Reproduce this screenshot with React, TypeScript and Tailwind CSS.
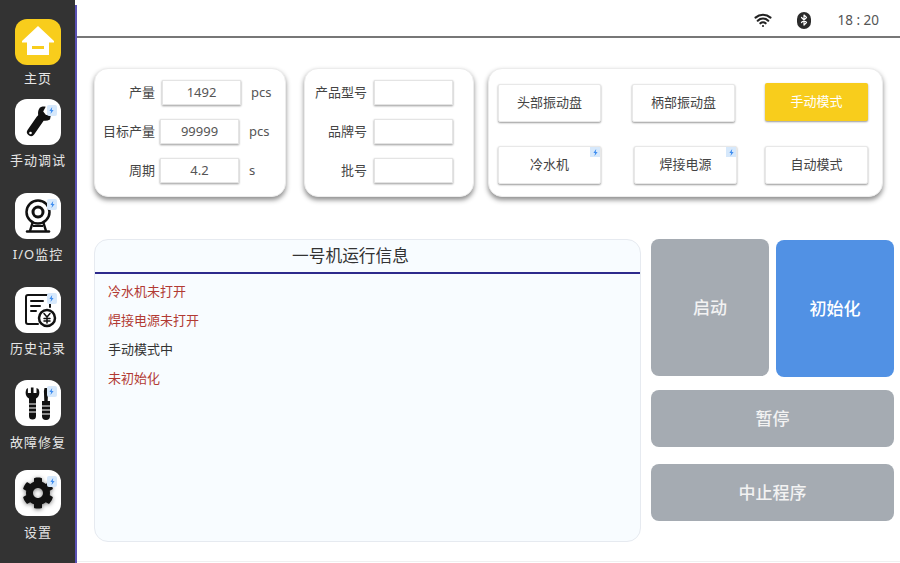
import { Bluetooth, Wifi } from 'lucide-react';
import { FaCog } from 'react-icons/fa';
import type { ReactNode } from 'react';

const FONT = 'font-["Noto_Sans","Noto_Sans_CJK_SC",sans-serif]';

function Flash({ className = '' }: { className?: string }) {
  return (
    <span className={`absolute flex items-center justify-center bg-[#d6e8fb] ${className}`}>
      <svg viewBox="0 0 10 10" className="w-[7px] h-[7px]">
        <path d="M6 0 2 5.6h2.4L3.6 10 8 4.2H5.4z" fill="#3f8ef0" />
      </svg>
    </span>
  );
}

function HomeIcon() {
  return (
    <svg viewBox="0 0 46 46" className="w-[46px] h-[46px]">
      <path d="M23 7 39 22v1.5h-5V36H12V23.5H7V22z" fill="#fff" />
      <rect x="17" y="27" width="12" height="3" fill="#f8cd1c" />
    </svg>
  );
}

function WrenchIcon() {
  return (
    <svg viewBox="0 0 46 46" className="w-[46px] h-[46px]">
      <path d="M25 20 16 33" stroke="#111" strokeWidth="8" strokeLinecap="round" />
      <path d="M25 8.500c-2.500 3-2.600 8-.2 11.300 2.800 2.400 6.800 2.700 10.200.6l1-5-5 .6-2.800-3.500 2.500-4.800c-2-.6-4.300-.2-5.700.8z" fill="#111" />
      <circle cx="15.500" cy="34" r="1.300" fill="#fff" />
    </svg>
  );
}

function CameraIcon() {
  return (
    <svg viewBox="0 0 46 46" className="w-[46px] h-[46px]" fill="none" stroke="#111">
      <circle cx="23" cy="19" r="11.500" strokeWidth="2.500" />
      <circle cx="23" cy="19" r="5" strokeWidth="3" />
      <path d="M17.500 30 15 38M28.500 30 31 38" strokeWidth="2.500" />
      <path d="M12 38.500h22" strokeWidth="2.500" strokeLinecap="round" />
      <path d="M18 33h10" strokeWidth="2" />
    </svg>
  );
}

function RecordIcon() {
  return (
    <svg viewBox="0 0 46 46" className="w-[46px] h-[46px]" fill="none" stroke="#111" strokeLinecap="round">
      <path d="M23 37H13a2 2 0 0 1-2-2V10a2 2 0 0 1 2-2h20a2 2 0 0 1 2 2v10" strokeWidth="2" />
      <path d="M16 14h12M16 19h9M16 24h5" strokeWidth="2" />
      <circle cx="32" cy="31" r="8" strokeWidth="2.500" />
      <path d="m29 26.500 3 3.500 3-3.500M32 30v6M29 31.500h6M29 34h6" strokeWidth="1.500" />
    </svg>
  );
}

function ToolsIcon() {
  return (
    <svg viewBox="0 0 46 46" className="w-[46px] h-[46px]" fill="#111">
      <path d="M11.500 9c-1.200 2.400-1.200 5.400.2 7.500.7 1 1.500 1.600 2.300 2V36a3.500 3.500 0 0 0 7 0V18.500c.8-.4 1.600-1 2.300-2 1.400-2.100 1.400-5.100.2-7.500l-2 -1V13h-3V7.500h-2.600V13h-3V8z" />
      <path d="M29.500 8h3l.6 3-.4 10h2.300v15a4 4 0 0 1-8 0V21h2.300l-.4-10z" />
      <path d="M14 24h7M14 28h7M14 32h7M27 26h8M27 30h8M27 34h8" stroke="#fff" strokeWidth="1.200" />
    </svg>
  );
}

const navItems: { label: string; icon: ReactNode; top: string; labelTop: string; flash?: boolean }[] = [
  { label: '主页', icon: <HomeIcon />, top: 'mt-[19px]', labelTop: 'mt-[5px]' },
  { label: '手动调试', icon: <WrenchIcon />, top: 'mt-[13px]', labelTop: 'mt-[7px]', flash: true },
  { label: 'I/O监控', icon: <CameraIcon />, top: 'mt-[25px]', labelTop: 'mt-[7px]', flash: true },
  { label: '历史记录', icon: <RecordIcon />, top: 'mt-[25px]', labelTop: 'mt-[7px]', flash: true },
  { label: '故障修复', icon: <ToolsIcon />, top: 'mt-[24px]', labelTop: 'mt-[8px]', flash: true },
  {
    label: '设置',
    icon: <FaCog className="text-[32px] text-[#111] drop-shadow-[0_1px_2px_rgba(0,0,0,0.5)]" />,
    top: 'mt-[20px]',
    labelTop: 'mt-[8px]',
    flash: true,
  },
];

function Field({ value = '', className = '' }: { value?: string; className?: string }) {
  return (
    <div
      className={`w-[79px] h-[25px] flex items-center justify-center bg-white text-[13px] text-[#555] border border-[#e4e4e4] shadow-[0_1px_2px_rgba(0,0,0,0.4)] ${className}`}
    >
      {value}
    </div>
  );
}

function ModeButton({ label, flash, className = '' }: { label: string; flash?: boolean; className?: string }) {
  return (
    <button
      className={`relative w-[103px] h-[38px] flex items-center justify-center rounded-[2px] bg-white text-[13px] text-[#444] border border-[#e8e8e8] shadow-[0_1px_2px_rgba(0,0,0,0.4)] ${className}`}
    >
      {label}
      {flash && <Flash className="top-0 right-0 w-[10px] h-[10px]" />}
    </button>
  );
}

const outputs = [
  { label: '产量', value: '1492', unit: 'pcs', gap: 'ml-[7px]', top: 'mt-[11px]' },
  { label: '目标产量', value: '99999', unit: 'pcs', gap: 'ml-[5px]', top: 'mt-[14px]' },
  { label: '周期', value: '4.2', unit: 's', gap: 'ml-[5px]', top: 'mt-[14px]' },
];

const products = [
  { label: '产品型号', top: 'mt-[11px]' },
  { label: '品牌号', top: 'mt-[14px]' },
  { label: '批号', top: 'mt-[14px]' },
];

const messages = [
  { text: '冷水机未打开', color: 'text-[#b23a33]' },
  { text: '焊接电源未打开', color: 'text-[#b23a33]' },
  { text: '手动模式中', color: 'text-[#333]' },
  { text: '未初始化', color: 'text-[#b23a33]' },
];

const cardClass = 'h-[129px] rounded-[14px] bg-white border border-[#ececec] shadow-[0_3px_5px_rgba(0,0,0,0.45)]';
const grayButton = 'flex items-center justify-center rounded-[8px] bg-[#a5abb2] text-[#f2f2f2] text-[17px] font-medium';

export default function App() {
  return (
    <div className={`w-[900px] h-[563px] flex overflow-hidden bg-white ${FONT}`}>
      {/* Sidebar */}
      <aside className="w-[75px] h-full shrink-0 pl-[1px] flex flex-col items-center bg-[#333333]">
        {navItems.map((item) => (
          <div key={item.label} className={`flex flex-col items-center ${item.top}`}>
            <div
              className={`relative w-[46px] h-[46px] flex items-center justify-center rounded-[12px] ${
                item.label === '主页' ? 'bg-[#f8cd1c]' : 'bg-white'
              }`}
            >
              {item.icon}
              {item.flash && <Flash className="top-[6px] right-[4px] w-[10px] h-[11px] rounded-[2px]" />}
            </div>
            <span
              className={`text-[13px] leading-[16px] tracking-[1px] text-[#e6e6e6] whitespace-nowrap ${item.labelTop}`}
            >
              {item.label}
            </span>
          </div>
        ))}
      </aside>
      <div className="w-[2px] mt-[5px] shrink-0 bg-[#5b52b5]" />

      <main className="flex-1 flex flex-col border-b border-[#f0f0f0] mb-[1px]">
        {/* Status bar */}
        <header className="h-[38px] shrink-0 flex items-center justify-end pr-[21px] pt-[4px] border-b-[2px] border-[#777777]">
          <Wifi size={18} strokeWidth={2.8} className="text-[#222]" />
          <span className="ml-[25px] w-[14px] h-[17px] flex items-center justify-center rounded-[7px] bg-[#2b2b2b]">
            <Bluetooth size={12} strokeWidth={2.4} className="text-white" />
          </span>
          <span className="ml-[26px] text-[13.5px] text-[#555]">18 : 20</span>
        </header>

        {/* Top cards */}
        <section className="mt-[30px] pl-[17px] flex">
          <div className={`w-[192px] pl-[7px] ${cardClass}`}>
            {outputs.map((row) => (
              <div key={row.label} className={`flex items-center ${row.top}`}>
                <span className="w-[53px] text-right text-[13px] text-[#444]">{row.label}</span>
                <Field value={row.value} className={row.gap} />
                <span className="ml-[10px] text-[13px] text-[#555]">{row.unit}</span>
              </div>
            ))}
          </div>

          <div className={`ml-[18px] w-[170px] ${cardClass}`}>
            {products.map((row) => (
              <div key={row.label} className={`flex items-center ${row.top}`}>
                <span className="w-[62px] text-right text-[13px] text-[#444]">{row.label}</span>
                <Field className="ml-[7px]" />
              </div>
            ))}
          </div>

          <div className={`ml-[14px] w-[395px] pl-[9px] ${cardClass}`}>
            <div className="flex items-start mt-[15px]">
              <ModeButton label="头部振动盘" />
              <ModeButton label="柄部振动盘" className="ml-[31px]" />
              <button className="ml-[30px] -mt-[1px] w-[103px] h-[38px] flex items-center justify-center rounded-[2px] bg-[#f8cd1c] text-white text-[13px] shadow-[0_1px_2px_rgba(0,0,0,0.4)]">
                手动模式
              </button>
            </div>
            <div className="flex items-start mt-[24px]">
              <ModeButton label="冷水机" flash />
              <ModeButton label="焊接电源" flash className="ml-[33px]" />
              <ModeButton label="自动模式" className="ml-[28px]" />
            </div>
          </div>
        </section>

        {/* Bottom area */}
        <section className="mt-[42px] pl-[17px] flex">
          <div className="w-[547px] h-[303px] rounded-[14px] bg-[#f8fcff] border border-[#e6eaf0] overflow-hidden">
            <div className="h-[34px] flex items-center justify-center pr-[34px] border-b-[2px] border-[#2d2a8c] text-[16.7px] text-[#333]">
              一号机运行信息
            </div>
            <ul className="pl-[13px] pt-[3px]">
              {messages.map((m) => (
                <li key={m.text} className={`h-[29px] flex items-center text-[13px] ${m.color}`}>
                  {m.text}
                </li>
              ))}
            </ul>
          </div>

          <div className="ml-[10px] w-[243px] flex flex-col">
            <div className="flex items-start">
              <button className={`w-[118px] h-[137px] ${grayButton}`}>启动</button>
              <button className="ml-[7px] mt-[1px] w-[118px] h-[137px] flex items-center justify-center rounded-[8px] bg-[#5191e4] text-white text-[17px] font-medium">
                初始化
              </button>
            </div>
            <button className={`mt-[13px] w-full h-[57px] ${grayButton}`}>暂停</button>
            <button className={`mt-[17px] w-full h-[57px] ${grayButton}`}>中止程序</button>
          </div>
        </section>
      </main>
    </div>
  );
}
